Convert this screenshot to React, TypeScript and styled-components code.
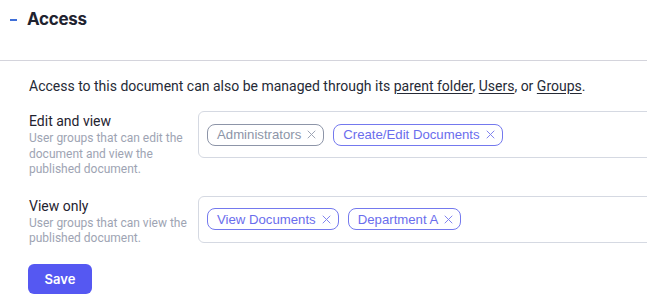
import React from "react";
import styled, { createGlobalStyle } from "styled-components";

type Group = {
	name: string;
	muted?: boolean;
};

type Rule = {
	title: string;
	hint: string;
	groups: Group[];
};

const rules: Rule[] = [
	{
		title: "Edit and view",
		hint: "User groups that can edit the document and view the published document.",
		groups: [{ name: "Administrators", muted: true }, { name: "Create/Edit Documents" }],
	},
	{
		title: "View only",
		hint: "User groups that can view the published document.",
		groups: [{ name: "View Documents" }, { name: "Department A" }],
	},
];

const App: React.FC = () => {
	return (
		<>
			<GlobalStyle />
			<Page>
				<Header>
					<Dash />
					<Title>Access</Title>
				</Header>
				<Body>
					<Intro>
						Access to this document can also be managed through its <Link>parent folder</Link>,{" "}
						<Link>Users</Link>, or <Link>Groups</Link>.
					</Intro>
					<Rows>
						{rules.map(rule => (
							<Row key={rule.title}>
								<Label>
									<LabelTitle>{rule.title}</LabelTitle>
									<LabelHint>{rule.hint}</LabelHint>
								</Label>
								<Picker>
									{rule.groups.map(group => (
										<Tag key={group.name} $muted={group.muted}>
											{group.name}
											<Remove viewBox="0 0 10 10">
												<path d="M0.8 0.8L9.2 9.2M9.2 0.8L0.8 9.2" />
											</Remove>
										</Tag>
									))}
								</Picker>
							</Row>
						))}
					</Rows>
					<SaveButton>Save</SaveButton>
				</Body>
			</Page>
		</>
	);
};

export default App;

const GlobalStyle = createGlobalStyle`
	body {
		margin: 0;
		background: #ffffff;
		overflow: hidden;
		font-family: Roboto, "Liberation Sans", sans-serif;
	}
`;

const Page = styled.main`
	width: 760px;
`;

const Header = styled.header`
	display: flex;
	align-items: center;
	gap: 10px;
	height: 38px;
	padding-left: 10px;
	border-bottom: 1px solid #d4d4dc;
	padding-bottom: 22px;
`;

const Dash = styled.span`
	width: 7px;
	height: 2px;
	background: #3f6fd8;
	margin-top: 1px;
`;

const Title = styled.h2`
	margin: 0;
	font-family: Inter, sans-serif;
	font-size: 17px;
	font-weight: 700;
	letter-spacing: -0.3px;
	color: #1f2330;
`;

const Body = styled.section`
	display: flex;
	flex-direction: column;
	align-items: flex-start;
	padding: 15px 0 0 29px;
`;

const Intro = styled.p`
	margin: 0 0 15px;
	font-size: 14px;
	line-height: 20px;
	color: #262a36;
`;

const Link = styled.a`
	color: #262a36;
	text-decoration: underline;
	text-underline-offset: 2px;
	cursor: pointer;
`;

const Rows = styled.div`
	display: flex;
	flex-direction: column;
	gap: 18px;
	align-self: stretch;
	margin-bottom: 17px;
`;

const Row = styled.div`
	display: grid;
	grid-template-columns: 169px 1fr;
	align-items: start;
`;

const Label = styled.div`
	display: flex;
	flex-direction: column;
	padding-top: 1px;
`;

const LabelTitle = styled.span`
	font-size: 14px;
	line-height: 19px;
	color: #1f2330;
`;

const LabelHint = styled.span`
	font-size: 12px;
	line-height: 15.5px;
	color: #9ea4b3;
	padding-right: 6px;
`;

const Picker = styled.div`
	display: flex;
	align-items: center;
	gap: 9px;
	height: 45px;
	padding: 0 8px;
	border: 1px solid #d5d9e2;
	border-radius: 6px;
`;

const Tag = styled.span<{ $muted?: boolean }>`
	display: inline-flex;
	align-items: center;
	gap: 6px;
	height: 20px;
	padding: 0 7px 0 9px;
	border: 1px solid ${p => (p.$muted ? "#8d95a8" : "#7479ee")};
	border-radius: 8px;
	font-family: "Liberation Sans", Arial, sans-serif;
	font-size: 13.2px;
	color: ${p => (p.$muted ? "#8d95a8" : "#6a6ded")};
	white-space: nowrap;
`;

const Remove = styled.svg`
	width: 9px;
	height: 9px;
	fill: none;
	stroke: currentColor;
	stroke-width: 1.1;
	opacity: 0.85;
`;

const SaveButton = styled.button`
	width: 64px;
	height: 30px;
	margin-left: -1px;
	border: none;
	border-radius: 6px;
	background: #5558f2;
	color: #ffffff;
	font-family: Inter, sans-serif;
	font-size: 13px;
	font-weight: 600;
	cursor: pointer;
`;
